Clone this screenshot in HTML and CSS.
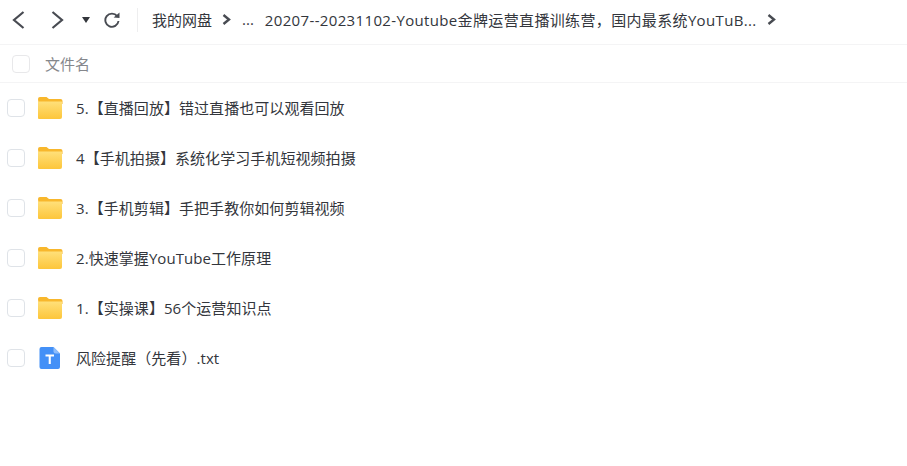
FILE: index.html
```html
<!DOCTYPE html>
<html>
<head>
  <meta charset="UTF-8">
  <title>我的网盘</title>
  <link rel="stylesheet" href="styles.css">
</head>
<body>

  <header class="toolbar">
    <div class="nav">
      <svg class="nav-back" width="16" height="22" viewBox="0 0 16 22"><path d="M13.500 3 4 11l9.500 8" fill="none" stroke="#484b52" stroke-width="2.200"/></svg>
      <svg class="nav-next" width="16" height="22" viewBox="0 0 16 22"><path d="M2.500 3 12 11l-9.500 8" fill="none" stroke="#484b52" stroke-width="2.200"/></svg>
      <svg class="nav-drop" width="8" height="6" viewBox="0 0 8 6"><path d="M0 0h8L4 6z" fill="#33363c"/></svg>
      <svg class="nav-refresh" width="16" height="16" viewBox="0 0 16 16"><path d="M13.200 4.200A6.600 6.600 0 1 0 14.500 9" fill="none" stroke="#484b52" stroke-width="1.900"/><path d="M9.600 5.600 15.500 6V0.600z" fill="#484b52"/></svg>
    </div>
    <nav class="crumbs">
      <span>我的网盘</span>
      <svg class="crumb-arrow" width="9" height="11" viewBox="0 0 9 11"><path d="M1.500 1 7 5.500 1.500 10" fill="none" stroke="#484b52" stroke-width="2.400"/></svg>
      <span class="crumb-more">...</span>
      <span class="crumb-long">20207--20231102-Youtube金牌运营直播训练营，国内最系统YouTuB...</span>
      <svg class="crumb-arrow" width="9" height="11" viewBox="0 0 9 11"><path d="M1.500 1 7 5.500 1.500 10" fill="none" stroke="#484b52" stroke-width="2.400"/></svg>
    </nav>
  </header>

  <div class="list-head">
    <span class="check check-head"></span>
    <span class="head-name">文件名</span>
  </div>

  <ul class="files">
    <li class="file">
      <span class="check"></span>
      <svg class="icon" width="26" height="24" viewBox="0 0 26 24"><use href="#folder"/></svg>
      <span class="name">5.【直播回放】错过直播也可以观看回放</span>
    </li>
    <li class="file">
      <span class="check"></span>
      <svg class="icon" width="26" height="24" viewBox="0 0 26 24"><use href="#folder"/></svg>
      <span class="name">4【手机拍摄】系统化学习手机短视频拍摄</span>
    </li>
    <li class="file">
      <span class="check"></span>
      <svg class="icon" width="26" height="24" viewBox="0 0 26 24"><use href="#folder"/></svg>
      <span class="name">3.【手机剪辑】手把手教你如何剪辑视频</span>
    </li>
    <li class="file">
      <span class="check"></span>
      <svg class="icon" width="26" height="24" viewBox="0 0 26 24"><use href="#folder"/></svg>
      <span class="name">2.快速掌握YouTube工作原理</span>
    </li>
    <li class="file">
      <span class="check"></span>
      <svg class="icon" width="26" height="24" viewBox="0 0 26 24"><use href="#folder"/></svg>
      <span class="name">1.【实操课】56个运营知识点</span>
    </li>
    <li class="file">
      <span class="check"></span>
      <svg class="icon" width="26" height="24" viewBox="0 0 26 24">
        <path d="M4.500 1h12l6.500 6.500v13.500a2 2 0 0 1-2 2h-16.500a2 2 0 0 1-2-2v-18a2 2 0 0 1 2-2z" fill="#4390f7"/>
        <path d="M16.500 1l6.500 6.500h-4.500a2 2 0 0 1-2-2z" fill="#8dbdfb"/>
        <path d="M8.500 8.500h8.500v2h-3.200v7.500h-2.100v-7.500h-3.200z" fill="#fff"/>
      </svg>
      <span class="name">风险提醒（先看）.txt</span>
    </li>
  </ul>

  <svg class="defs" width="0" height="0">
    <defs>
      <linearGradient id="folderFace" x1="0" y1="0" x2="0" y2="1">
        <stop offset="0" stop-color="#ffe07a"/>
        <stop offset="1" stop-color="#fdc63a"/>
      </linearGradient>
      <symbol id="folder" viewBox="0 0 26 24">
        <path d="M1 3a2 2 0 0 1 2-2h6.500l2.500 2h11.500a2 2 0 0 1 2 2v3h-24z" fill="#f8b72c"/>
        <path d="M1 5.500h23.500a.5.500 0 0 1 .5.500v15a2 2 0 0 1-2 2h-21a1 1 0 0 1-1-1z" fill="url(#folderFace)"/>
      </symbol>
    </defs>
  </svg>

</body>
</html>
```

FILE: styles.css
```css
body {
  margin: 0;
  background: #fff;
  color: #33363c;
  font-family: "Open Sans", "Noto Sans CJK SC", sans-serif;
  font-size: 15px;
}

/* Top bar */
.toolbar {
  display: flex;
  align-items: center;
  height: 44px;
  border-bottom: 1px solid #f4f4f5;
}

.nav {
  display: flex;
  align-items: center;
  width: 137px;
  height: 24px;
  border-right: 1px solid #eeeeef;
  flex-shrink: 0;
  margin-top: -4px;
}

.nav-back {
  margin-left: 10px;
}

.nav-next {
  margin-left: 24px;
}

.nav-drop {
  margin-left: 16px;
}

.nav-refresh {
  margin-left: 14px;
}

.crumbs {
  display: flex;
  align-items: center;
  margin-left: 14px;
  margin-top: -6px;
  white-space: nowrap;
}

.crumb-arrow {
  margin-left: 10px;
  flex-shrink: 0;
}

.crumb-more {
  margin-left: 11px;
}

.crumb-long {
  margin-left: 11px;
  letter-spacing: 0.35px;
}

/* Column header */
.list-head {
  display: flex;
  align-items: center;
  height: 37px;
  border-bottom: 1px solid #f4f4f5;
}

.check {
  display: block;
  width: 16px;
  height: 16px;
  margin-left: 7px;
  border: 1px solid #dfe3e8;
  border-radius: 4px;
  flex-shrink: 0;
}

.check-head {
  margin-left: 12px;
  border-color: #e8e8ea;
}

.head-name {
  margin-left: 15px;
  color: #85878c;
}

/* File rows */
.files {
  margin: 0;
  padding: 0;
  list-style: none;
}

.file {
  display: flex;
  align-items: center;
  height: 50px;
}

.icon {
  margin-left: 12px;
  flex-shrink: 0;
}

.name {
  margin-left: 13px;
  margin-top: -2px;
  letter-spacing: 0.06px;
}

.defs {
  display: block;
}
```
